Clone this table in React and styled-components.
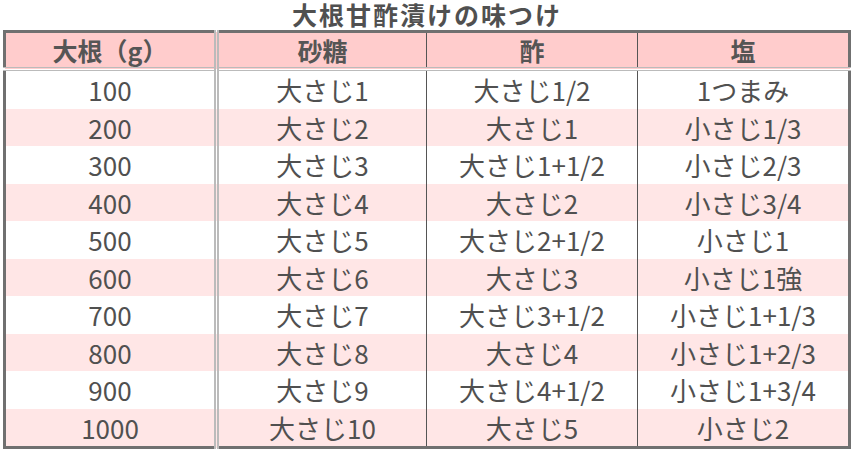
import styled, { createGlobalStyle } from 'styled-components';

const GlobalStyle = createGlobalStyle`
	html, body {
		margin: 0;
		padding: 0;
		background: #ffffff;
	}
	body {
		font-family: "Noto Sans CJK JP", "Noto Sans", sans-serif;
		color: #555555;
	}
`;

const Page = styled.div`
	width: 854px;
	height: 452px;
	box-sizing: border-box;
	padding: 0 3px;
	display: flex;
	flex-direction: column;
`;

const Title = styled.h1`
	margin: 0;
	height: 30px;
	line-height: 28px;
	text-align: center;
	font-size: 25px;
	font-weight: 700;
	color: #505050;
	letter-spacing: 2px;
`;

const Table = styled.table`
	width: 848px;
	border-collapse: collapse;
	border: 3px solid #707070;
	table-layout: fixed;
`;

const HeadCell = styled.th`
	height: 34px;
	padding: 0;
	background: #ffcccc;
	font-size: 25px;
	font-weight: 700;
	line-height: 34px;
	text-align: center;
	color: #555555;
	border-bottom: 4px double #bbbbbb;
	border-right: ${(p) => (p.$first ? '5px double #bbbbbb' : '1px solid #555555')};
`;

const Row = styled.tr`
	background: ${(p) => (p.$even ? '#ffe6e6' : '#ffffff')};
`;

const Cell = styled.td`
	height: 37.5px;
	padding: 0;
	font-size: 26px;
	line-height: 37px;
	text-align: center;
	color: #505050;
	white-space: nowrap;
	border-right: ${(p) => (p.$first ? '5px double #bbbbbb' : '1px solid #555555')};
`;

const headers = ['大根（g）', '砂糖', '酢', '塩'];

const rows = [
	['100', '大さじ1', '大さじ1/2', '1つまみ'],
	['200', '大さじ2', '大さじ1', '小さじ1/3'],
	['300', '大さじ3', '大さじ1+1/2', '小さじ2/3'],
	['400', '大さじ4', '大さじ2', '小さじ3/4'],
	['500', '大さじ5', '大さじ2+1/2', '小さじ1'],
	['600', '大さじ6', '大さじ3', '小さじ1強'],
	['700', '大さじ7', '大さじ3+1/2', '小さじ1+1/3'],
	['800', '大さじ8', '大さじ4', '小さじ1+2/3'],
	['900', '大さじ9', '大さじ4+1/2', '小さじ1+3/4'],
	['1000', '大さじ10', '大さじ5', '小さじ2']
];

const App = () => {
	return (
		<>
			<GlobalStyle />
			<Page>
				<Title>大根甘酢漬けの味つけ</Title>
				<Table>
					<colgroup>
						<col style={{ width: 212 }} />
						<col style={{ width: 210 }} />
						<col style={{ width: 211 }} />
						<col />
					</colgroup>
					<thead>
						<tr>
							{headers.map((h, i) => (
								<HeadCell key={h} $first={i === 0}>
									{h}
								</HeadCell>
							))}
						</tr>
					</thead>
					<tbody>
						{rows.map((r, ri) => (
							<Row key={r[0]} $even={ri % 2 === 1}>
								{r.map((c, ci) => (
									<Cell key={ci} $first={ci === 0}>
										{c}
									</Cell>
								))}
							</Row>
						))}
					</tbody>
				</Table>
			</Page>
		</>
	);
};

export default App;
